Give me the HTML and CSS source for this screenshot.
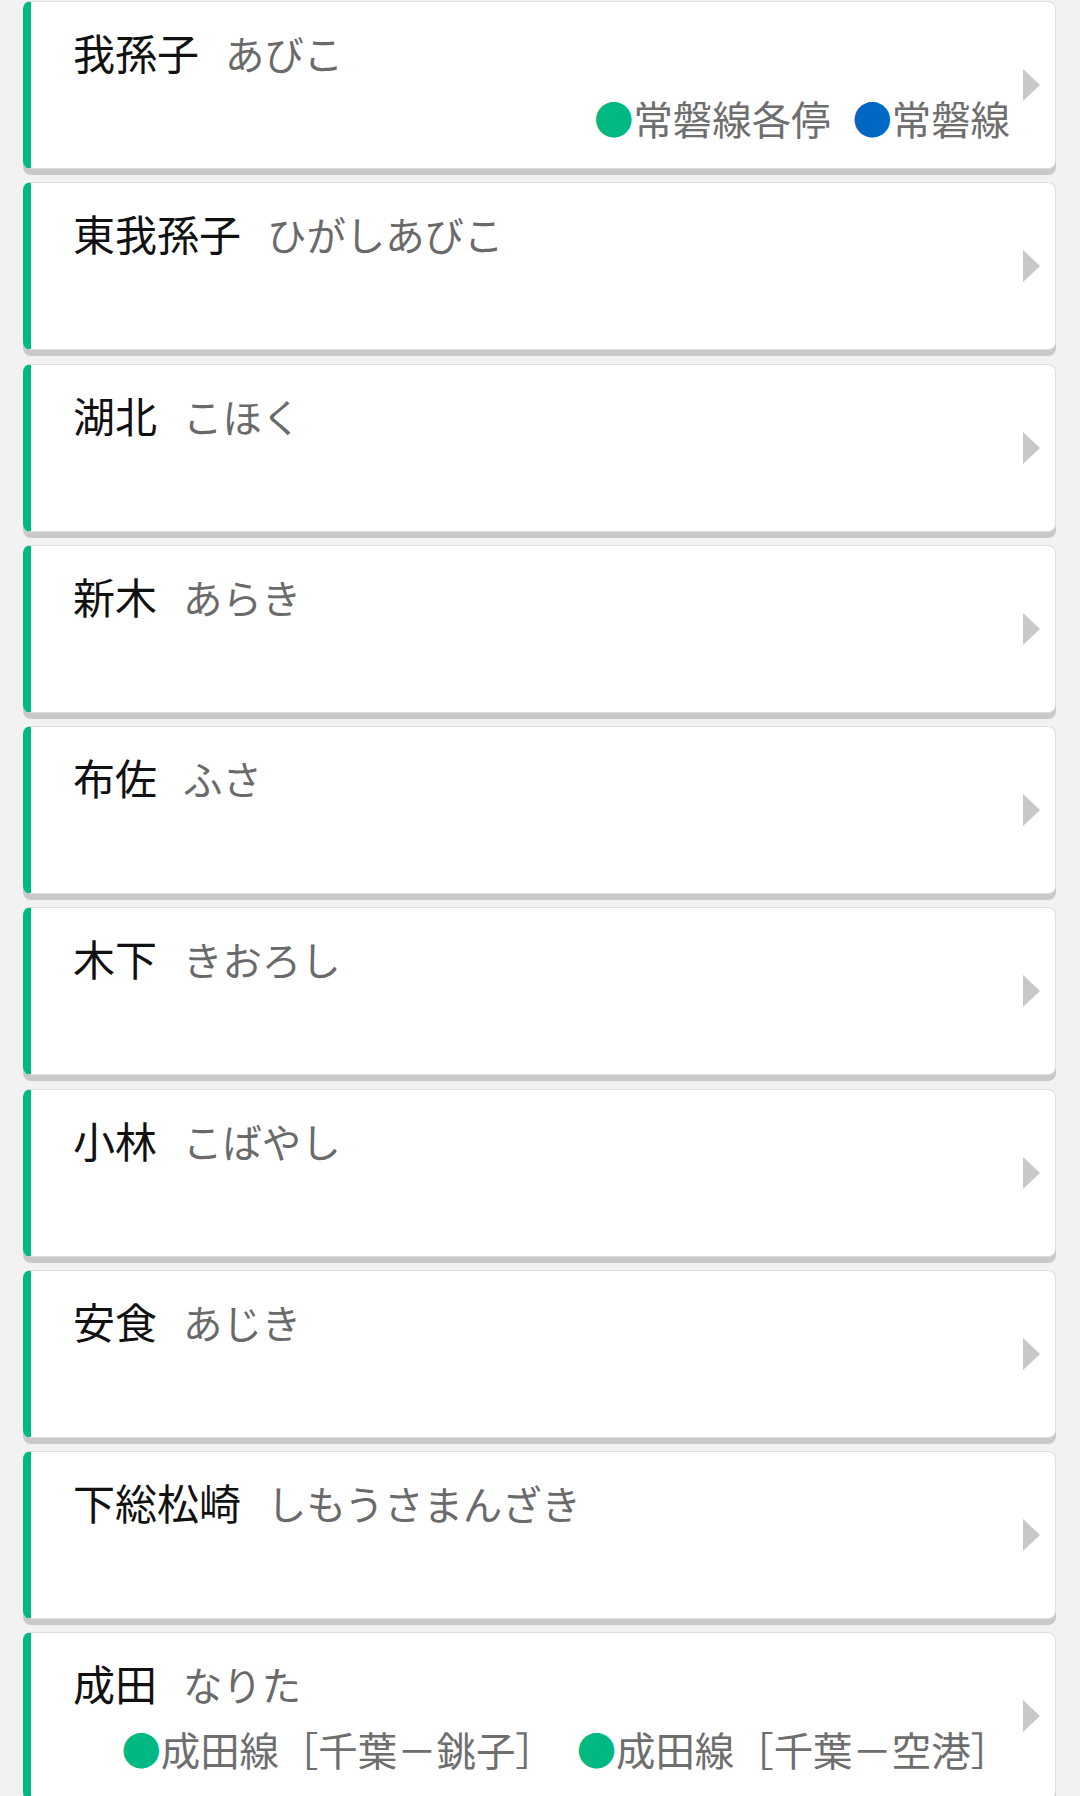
FILE: index.html
```html
<!DOCTYPE html>
<html lang="ja">
<head>
    <meta charset="UTF-8">
    <meta name="viewport" content="width=device-width, initial-scale=1.0">
    <title>駅一覧</title>
    <link rel="stylesheet" href="styles.css">
</head>
<body>
    <ul class="station-list">
        <li class="station">
            <div class="station-body">
                <div class="station-name">我孫子<span class="station-kana">あびこ</span></div>
                <div class="station-lines">
                    <span class="line"><span class="dot dot-green">●</span>常磐線各停</span>
                    <span class="line"><span class="dot dot-blue">●</span>常磐線</span>
                </div>
            </div>
            <div class="station-arrow"><svg width="17" height="32" viewBox="0 0 17 32"><polygon points="0,0 17,16 0,32" fill="#c8c8c8"/></svg></div>
        </li>
        <li class="station">
            <div class="station-body">
                <div class="station-name">東我孫子<span class="station-kana">ひがしあびこ</span></div>
            </div>
            <div class="station-arrow"><svg width="17" height="32" viewBox="0 0 17 32"><polygon points="0,0 17,16 0,32" fill="#c8c8c8"/></svg></div>
        </li>
        <li class="station">
            <div class="station-body">
                <div class="station-name">湖北<span class="station-kana">こほく</span></div>
            </div>
            <div class="station-arrow"><svg width="17" height="32" viewBox="0 0 17 32"><polygon points="0,0 17,16 0,32" fill="#c8c8c8"/></svg></div>
        </li>
        <li class="station">
            <div class="station-body">
                <div class="station-name">新木<span class="station-kana">あらき</span></div>
            </div>
            <div class="station-arrow"><svg width="17" height="32" viewBox="0 0 17 32"><polygon points="0,0 17,16 0,32" fill="#c8c8c8"/></svg></div>
        </li>
        <li class="station">
            <div class="station-body">
                <div class="station-name">布佐<span class="station-kana">ふさ</span></div>
            </div>
            <div class="station-arrow"><svg width="17" height="32" viewBox="0 0 17 32"><polygon points="0,0 17,16 0,32" fill="#c8c8c8"/></svg></div>
        </li>
        <li class="station">
            <div class="station-body">
                <div class="station-name">木下<span class="station-kana">きおろし</span></div>
            </div>
            <div class="station-arrow"><svg width="17" height="32" viewBox="0 0 17 32"><polygon points="0,0 17,16 0,32" fill="#c8c8c8"/></svg></div>
        </li>
        <li class="station">
            <div class="station-body">
                <div class="station-name">小林<span class="station-kana">こばやし</span></div>
            </div>
            <div class="station-arrow"><svg width="17" height="32" viewBox="0 0 17 32"><polygon points="0,0 17,16 0,32" fill="#c8c8c8"/></svg></div>
        </li>
        <li class="station">
            <div class="station-body">
                <div class="station-name">安食<span class="station-kana">あじき</span></div>
            </div>
            <div class="station-arrow"><svg width="17" height="32" viewBox="0 0 17 32"><polygon points="0,0 17,16 0,32" fill="#c8c8c8"/></svg></div>
        </li>
        <li class="station">
            <div class="station-body">
                <div class="station-name">下総松崎<span class="station-kana">しもうさまんざき</span></div>
            </div>
            <div class="station-arrow"><svg width="17" height="32" viewBox="0 0 17 32"><polygon points="0,0 17,16 0,32" fill="#c8c8c8"/></svg></div>
        </li>
        <li class="station">
            <div class="station-body">
                <div class="station-name">成田<span class="station-kana">なりた</span></div>
                <div class="station-lines">
                    <span class="line"><span class="dot dot-green">●</span>成田線［千葉－銚子］</span>
                    <span class="line"><span class="dot dot-green">●</span>成田線［千葉－空港］</span>
                </div>
            </div>
            <div class="station-arrow"><svg width="17" height="32" viewBox="0 0 17 32"><polygon points="0,0 17,16 0,32" fill="#c8c8c8"/></svg></div>
        </li>
    </ul>
</body>
</html>
```

FILE: styles.css
```css
body {
    margin: 0;
    background-color: #f2f2f2;
    font-family: "Noto Sans CJK JP", "Noto Sans", sans-serif;
}
.station-list {
    list-style: none;
    margin: 0;
    padding: 1px 24px 0 23px;
}
.station {
    display: flex;
    box-sizing: border-box;
    height: 168px;
    margin-bottom: 13.25px;
    background-color: #fff;
    border: 1px solid #dedede;
    border-left: 8px solid #00b982;
    border-radius: 8px;
    box-shadow: 0 6px 0 #c9c9c9;
}
.station-body {
    flex: 1;
    padding: 25px 0 0 42px;
}
.station-name {
    font-size: 42px;
    line-height: 50px;
    color: #111;
}
.station-kana {
    margin-left: 26px;
    font-size: 39.4px;
    color: #6a6a6a;
}
.station-lines {
    display: flex;
    justify-content: flex-end;
    gap: 22px;
    margin-top: 16px;
    font-size: 39.4px;
    line-height: 48px;
    color: #6e6e6e;
    white-space: nowrap;
}
.dot-green {
    color: #00b982;
}
.dot-blue {
    color: #0068c2;
}
.station-arrow {
    display: flex;
    align-items: center;
    margin: 0 15px 0 13px;
}
.station-arrow svg {
    display: block;
}
```
